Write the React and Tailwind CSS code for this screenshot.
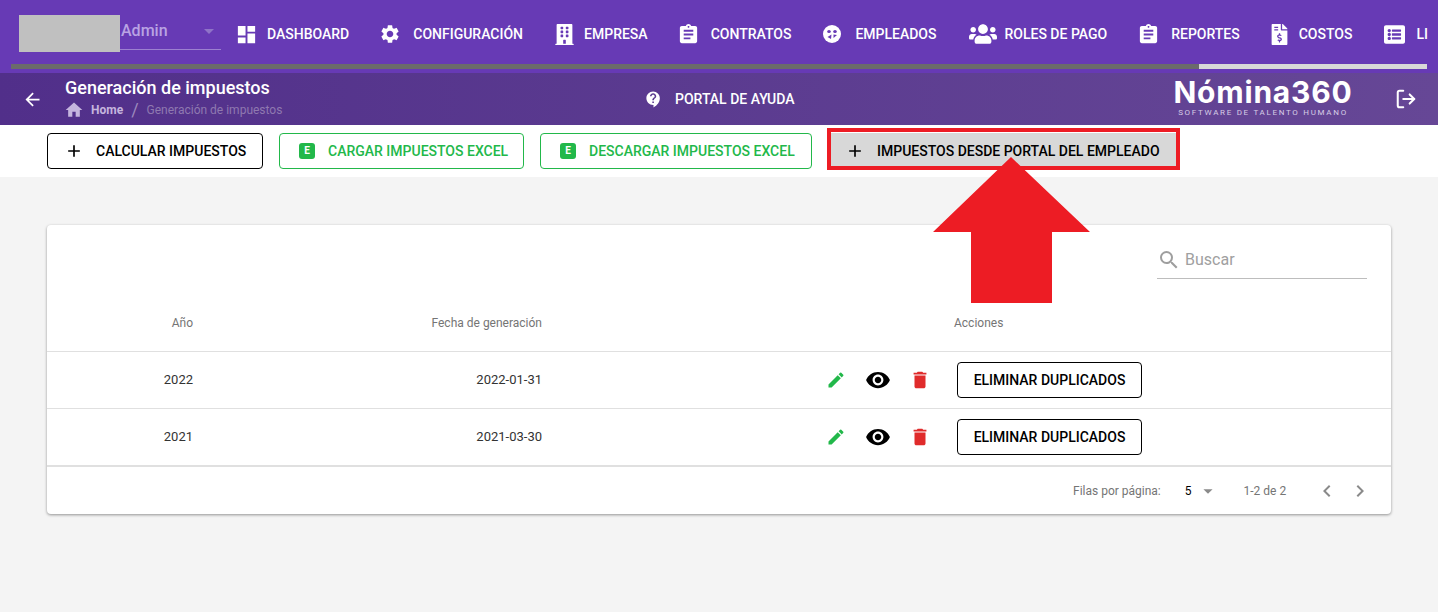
import React from 'react'
import {
  MdDashboard, MdSettings, MdAssignment, MdArrowBack, MdHome, MdContactSupport,
  MdAdd, MdEdit, MdRemoveRedEye, MdDelete, MdSearch, MdChevronLeft, MdChevronRight, MdArrowDropDown,
} from 'react-icons/md'
import { FaBuilding, FaUsers, FaFileInvoiceDollar, FaListAlt } from 'react-icons/fa'
import { FiLogOut } from 'react-icons/fi'

const NavItem = ({ icon, label, iconBox, gap }) => (
  <div className={`flex items-center shrink-0 ${gap}`}>
    <span className={`flex justify-center [&>svg]:shrink-0 ${iconBox}`}>{icon}</span>
    <span className="text-sm font-medium whitespace-nowrap text-white">{label}</span>
  </div>
)

const ExcelIcon = () => (
  <span className="flex h-[16px] w-[16px] items-center justify-center rounded-[3px] bg-[#22b84a] text-[10px] font-bold text-white">
    E
  </span>
)

// round face used by the EMPLEADOS entry
const FaceIcon = () => (
  <svg width="18" height="18" viewBox="0 0 18 18">
    <circle cx="9" cy="9" r="9" fill="#fff" />
    <ellipse cx="6" cy="6.5" rx="1.8" ry="1.5" fill="#673ab5" />
    <ellipse cx="12" cy="6.5" rx="1.8" ry="1.5" fill="#673ab5" />
    <path d="M4.5 12 L8.5 9.5 L8 14 Z" fill="#673ab5" />
    <path d="M10.5 9.5 L14 10 L10.5 13 Z" fill="#673ab5" />
  </svg>
)

const Row = ({ year, date }) => (
  <div className="flex h-[57px] items-center border-b border-[#e0e0e0] text-[13px] text-[#333]">
    <div className="w-[146px] text-right">{year}</div>
    <div className="w-[349px] text-right">{date}</div>
    <div className="ml-[273px] flex w-[42px] justify-center"><MdEdit className="text-[20px] text-[#22b84a]" /></div>
    <div className="flex w-[42px] justify-center"><MdRemoveRedEye className="text-[26px] text-black" /></div>
    <div className="flex w-[42px] justify-center"><MdDelete className="text-[22px] text-[#e02b2b]" /></div>
    <button className="ml-[16px] h-[36px] w-[185px] rounded-[4px] border border-black text-sm font-[460] text-black">
      ELIMINAR DUPLICADOS
    </button>
  </div>
)

const App = () => {
  return (
    <div className="relative h-[612px] w-[1438px] overflow-hidden bg-[#f4f4f4] font-['Roboto',sans-serif]">
      <header className="h-[73px] bg-[#673ab5] pl-[11px] pr-[11px]">
        <div className="flex h-[64px] items-start">
          <div className="mt-[15px] ml-[8px] h-[37px] w-[101px] shrink-0 bg-[#c0c0c0]"></div>
          <div className="mt-[15px] flex h-[35px] w-[101px] shrink-0 items-start justify-between border-b border-[#9c80d0] pl-[1px]">
            <span className="mt-[4px] text-base font-medium text-[#b9a3e3]">Admin</span>
            <MdArrowDropDown className="mt-[4px] text-[24px] text-[#8f73c8]" />
          </div>
          <nav className="mt-[20px] ml-[16px] flex items-center gap-x-[32px]">
            <NavItem icon={<MdDashboard className="text-[23px] text-white" />} label="DASHBOARD" iconBox="w-[18px]" gap="gap-x-[12px]" />
            <NavItem icon={<MdSettings className="text-[22px] text-white" />} label="CONFIGURACIÓN" iconBox="w-[18px]" gap="gap-x-[14px]" />
            <NavItem icon={<FaBuilding className="text-[21px] text-white" />} label="EMPRESA" iconBox="w-[18px]" gap="gap-x-[11px]" />
            <NavItem icon={<MdAssignment className="text-[23px] text-white" />} label="CONTRATOS" iconBox="w-[18px]" gap="gap-x-[13px]" />
            <NavItem icon={<FaceIcon />} label="EMPLEADOS" iconBox="w-[18px]" gap="gap-x-[14px]" />
            <NavItem icon={<FaUsers className="text-[28px] text-white" />} label="ROLES DE PAGO" iconBox="w-[29px]" gap="gap-x-[7px]" />
            <NavItem icon={<MdAssignment className="text-[23px] text-white" />} label="REPORTES" iconBox="w-[18px]" gap="gap-x-[14px]" />
            <NavItem icon={<FaFileInvoiceDollar className="text-[21px] text-white" />} label="COSTOS" iconBox="w-[16px]" gap="gap-x-[11px]" />
            <NavItem icon={<FaListAlt className="text-[21px] text-white" />} label="LI" iconBox="w-[20px]" gap="gap-x-[12px]" />
          </nav>
        </div>
        <div className="flex h-[5px]">
          <div className="w-[1188px] bg-[#6b6b6b]"></div>
          <div className="w-[228px] bg-[#d8d8d8]"></div>
        </div>
      </header>

      <div className="flex h-[52px] items-center bg-gradient-to-r from-[#512f8a] to-[#664796] pl-[22px] text-white">
        <MdArrowBack className="text-[21px]" />
        <div className="ml-[22px] w-[520px] shrink-0 pb-[2px]">
          <div className="text-lg leading-[22px] font-medium">Generación de impuestos</div>
          <div className="mt-[1px] flex items-center text-xs leading-[16px]">
            <MdHome className="-ml-[1px] text-[20px] text-[#c5b5de]" />
            <span className="ml-[7px] font-bold text-[#c5b5de]">Home</span>
            <span className="mr-[8px] ml-[8px] text-[18px] leading-none text-[#9c88bd]">/</span>
            <span className="text-[#8f79b0]">Generación de impuestos</span>
          </div>
        </div>
        <MdContactSupport className="ml-[59px] text-[19px]" />
        <span className="ml-[12px] w-[499px] shrink-0 text-sm font-medium">PORTAL DE AYUDA</span>
        <div className="flex w-[178px] shrink-0 flex-col items-center pb-[2px]">
          <span className="font-['Inter',sans-serif] text-[30px] leading-[26px] font-bold tracking-[0.8px] whitespace-nowrap">Nómina360</span>
          <span className="mt-[3px] text-[8px] leading-[9px] tracking-[1.7px] whitespace-nowrap text-[#d6cde6]">SOFTWARE DE TALENTO HUMANO</span>
        </div>
        <FiLogOut className="ml-[43px] text-[22px] [stroke-width:2.2]" />
      </div>

      <div className="flex h-[52px] items-center gap-x-[16px] bg-white pl-[47px]">
        <button className="flex h-[36px] w-[216px] items-center rounded-[4px] border border-black pl-[16px] text-sm font-[460] text-black">
          <MdAdd className="text-[20px]" />
          <span className="ml-[12px]">CALCULAR IMPUESTOS</span>
        </button>
        <button className="flex h-[36px] w-[245px] items-center rounded-[4px] border border-[#22b84a] pl-[19px] text-sm font-[460] text-[#22b84a]">
          <ExcelIcon />
          <span className="ml-[13px]">CARGAR IMPUESTOS EXCEL</span>
        </button>
        <button className="flex h-[36px] w-[272px] items-center rounded-[4px] border border-[#22b84a] pl-[19px] text-sm font-[460] text-[#22b84a]">
          <ExcelIcon />
          <span className="ml-[13px]">DESCARGAR IMPUESTOS EXCEL</span>
        </button>
        <button className="relative flex h-[36px] w-[348px] items-center bg-[#d8d8d8] pl-[17px] text-sm font-[460] text-black">
          <MdAdd className="text-[20px]" />
          <span className="ml-[12px]">IMPUESTOS DESDE PORTAL DEL EMPLEADO</span>
          <span className="absolute -top-[5px] -right-[4px] -bottom-[1px] -left-[1px] border-4 border-[#ed1c24]"></span>
        </button>
      </div>

      <main className="px-[47px] pt-[48px]">
        <div className="h-[289px] rounded-[4px] bg-white shadow-[0_1px_3px_rgba(0,0,0,0.4)]">
          <div className="flex h-[75px] justify-end pr-[24px] pt-[17px]">
            <div className="flex h-[37px] w-[210px] items-center border-b border-[#bdbdbd]">
              <MdSearch className="text-[24px] text-[#9e9e9e]" />
              <span className="ml-[4px] text-base text-[#a0a0a0]">Buscar</span>
            </div>
          </div>
          <div className="flex h-[52px] items-center border-b border-[#e0e0e0] pb-[5px] text-xs text-[#757575]">
            <div className="w-[146px] text-right">Año</div>
            <div className="w-[349px] text-right">Fecha de generación</div>
            <div className="ml-[412px]">Acciones</div>
          </div>
          <Row year="2022" date="2022-01-31" />
          <Row year="2021" date="2021-03-30" />
          <div className="flex h-[48px] items-center border-t border-[#e0e0e0] text-xs text-[#757575]">
            <span className="ml-[1026px]">Filas por página:</span>
            <span className="ml-[24px] text-black">5</span>
            <MdArrowDropDown className="ml-[5px] text-[22px] text-[#8a8a8a]" />
            <span className="ml-[25px]">1-2 de 2</span>
            <MdChevronLeft className="ml-[29px] text-[24px] text-[#8a8a8a]" />
            <MdChevronRight className="ml-[9px] text-[24px] text-[#8a8a8a]" />
          </div>
        </div>
      </main>

      <svg className="absolute top-[157px] left-[933px]" width="158" height="147" viewBox="0 0 158 147">
        <polygon points="78,0 157,75 119,75 119,146 38,146 38,75 0,75" fill="#ed1c24" />
      </svg>
    </div>
  )
}

export default App
